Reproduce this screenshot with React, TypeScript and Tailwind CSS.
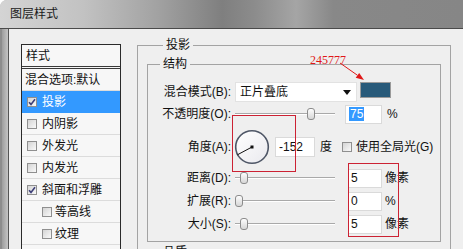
import React from "react";

const FONT = "font-['Liberation_Sans','Noto_Sans_CJK_SC',sans-serif]";

function Check({ checked = false }: { checked?: boolean }) {
  return (
    <span className="flex h-[10px] w-[10px] shrink-0 items-center justify-center border border-[#8f8f8f] bg-[linear-gradient(135deg,#d4d4d4,#f9f9f9)]">
      {checked && (
        <svg width="8" height="8" viewBox="0 0 8 8">
          <path d="M1 4.2 L3 6.4 L7 1.2" fill="none" stroke="#3d3f78" strokeWidth="1.6" />
        </svg>
      )}
    </span>
  );
}

function Slider({ pos }: { pos: number }) {
  return (
    <div className="relative h-[14px] w-[100px] shrink-0">
      <div className="absolute left-0 right-0 top-[6px] h-[2px] border-t border-[#a9a9a9] bg-white" />
      <div
        className="absolute top-[1px] h-[12px] w-[8px] rounded-[3px] border border-[#8c8c8c] bg-[linear-gradient(#fdfdfd,#d6d6d6)]"
        style={{ left: pos }}
      />
    </div>
  );
}

const STYLES = [
  { name: "内阴影" },
  { name: "外发光" },
  { name: "内发光" },
  { name: "斜面和浮雕", checked: true },
  { name: "等高线", sub: true },
  { name: "纹理", sub: true },
];

function StyleList() {
  return (
    <div className="mt-[6px] w-[100px] shrink-0 self-start border border-[#2a2a2a] bg-[#f7f7f7] pb-[20px]">
      <div className="flex h-[21px] items-center pl-[4px]">样式</div>
      <div className="h-[3px] border-y border-[#3a3a3a]" />
      <div className="flex h-[22px] items-center border-b border-[#dcdcdc] pl-[3px]">混合选项:默认</div>
      <div className="flex h-[22px] items-center gap-[5px] bg-[#3399ff] pl-[5px] text-white">
        <Check checked />
        投影
      </div>
      {STYLES.map((s) => (
        <div
          key={s.name}
          className={
            "flex h-[22px] items-center border-b border-[#dcdcdc] " +
            (s.sub ? "gap-[3px] pl-[20px]" : "gap-[5px] pl-[5px]")
          }
        >
          <Check checked={s.checked} />
          {s.name}
        </div>
      ))}
    </div>
  );
}

function Label({ children }: { children: React.ReactNode }) {
  return <div className="w-[83px] shrink-0 text-right">{children}</div>;
}

function Dial() {
  return (
    <svg width="36" height="36" viewBox="0 0 36 36" className="ml-[3px] shrink-0">
      <defs>
        <linearGradient id="dialFill" x1="0" y1="0" x2="1" y2="1">
          <stop offset="0" stopColor="#ffffff" />
          <stop offset="1" stopColor="#e9e9ee" />
        </linearGradient>
      </defs>
      <circle cx="18" cy="18" r="16.3" fill="url(#dialFill)" stroke="#4e5666" strokeWidth="1.6" />
      <line x1="18" y1="18" x2="3.4" y2="25.8" stroke="#111" strokeWidth="1" />
      <rect x="16.5" y="16.5" width="3" height="3" fill="#111" />
    </svg>
  );
}

export default function App() {
  return (
    <div className={"relative flex h-[249px] w-[463px] flex-col overflow-hidden rounded-tl-[7px] bg-[#b4b4b4] text-[12px] leading-[14px] text-[#111] " + FONT}>
      {/* title bar */}
      <div className="flex h-[28px] shrink-0 items-center bg-[linear-gradient(to_right,#d4d4d4_0%,#c2c2c2_18%,#a2a2a2_34%,#7f7f7f_48%,#8c8c8c_55%,#a5a5a5_64%,#888888_72%,#868686_100%)] pl-[10px] text-[#1a1a1a]">
        图层样式
      </div>

      <div className="flex flex-1 border-t border-[#4a4a4a]">
        {/* left window frame */}
        <div className="w-[8px] shrink-0 border-l-[2px] border-[#8d8d8d] bg-[linear-gradient(to_right,#9e9e9e,#c4c4c4)]" />

        <div className="flex flex-1 items-start border-l border-[#555] bg-[#efefef] pl-[12px] pt-[9px]">
          <StyleList />

          {/* 投影 group */}
          <fieldset className="ml-[16px] w-[314px] shrink-0 border border-[#a3a3a3] pb-[40px] pl-[9px]">
            <legend className="ml-[16px] px-[3px] leading-[14px]">投影</legend>

            <fieldset className="mt-[5px] w-[294px] border border-[#a3a3a3] pb-[7px]">
              <legend className="ml-[12px] px-[3px] leading-[14px]">结构</legend>

              <div className="mt-[11px] flex h-[20px] items-center">
                <Label>混合模式(B):</Label>
                <div className="ml-[4px] flex h-[20px] w-[122px] items-center justify-between border border-[#e2e2e2] bg-white pl-[4px] pr-[5px]">
                  <span>正片叠底</span>
                  <svg width="8" height="5" viewBox="0 0 8 5">
                    <path d="M0 0 H8 L4 5 Z" fill="#111" />
                  </svg>
                </div>
                <div className="ml-[3px] h-[16px] w-[31px] self-start border border-[#9a9a9a] bg-[#285a7a]" />
              </div>

              <div className="mt-[2px] flex h-[20px] items-center">
                <Label>不透明度(O):</Label>
                <div className="ml-[4px]">
                  <Slider pos={72} />
                </div>
                <div className="ml-[10px] flex h-[19px] w-[37px] items-center border border-[#dadada] bg-white pl-[3px]">
                  <span className="bg-[#3399ff] px-[1px] text-white">75</span>
                </div>
                <span className="ml-[5px]">%</span>
              </div>

              <div className="mt-[4px] flex h-[38px] items-center">
                <Label>角度(A):</Label>
                <Dial />
                <div className="ml-[5px] flex h-[20px] w-[40px] items-center border border-[#dadada] bg-white pl-[3px]">-152</div>
                <span className="ml-[5px]">度</span>
                <span className="ml-[10px]">
                  <Check />
                </span>
                <span className="ml-[4px]">使用全局光(G)</span>
              </div>

              {[
                { l: "距离(D):", v: "5", u: "像素", p: 5 },
                { l: "扩展(R):", v: "0", u: "%", p: 0 },
                { l: "大小(S):", v: "5", u: "像素", p: 5 },
              ].map((r, i) => (
                <div key={r.l} className={"flex h-[20px] items-center " + (i === 0 ? "mt-[2px]" : "mt-[3px]")}>
                  <Label>{r.l}</Label>
                  <div className="ml-[4px]">
                    <Slider pos={r.p} />
                  </div>
                  <div className="ml-[13px] flex h-[19px] w-[34px] items-center border border-[#dadada] bg-white pl-[2px]">{r.v}</div>
                  <span className="ml-[3px]">{r.u}</span>
                </div>
              ))}
            </fieldset>

            <fieldset className="mt-[3px] h-[60px] w-[294px] border border-[#a3a3a3]">
              <legend className="ml-[12px] px-[3px] leading-[14px]">品质</legend>
            </fieldset>
          </fieldset>
        </div>
      </div>

      {/* red annotations */}
      <div className="absolute left-[232px] top-[115px] h-[57px] w-[64px] border border-[#cc2233]" />
      <div className="absolute left-[348px] top-[163px] h-[74px] w-[51px] border border-[#cc2233]" />
      <div className="absolute left-[310px] top-[53px] font-['Liberation_Serif',serif] text-[12px] leading-[14px] text-[#e01818]">245777</div>
      <svg className="absolute left-[336px] top-[58px]" width="32" height="26" viewBox="0 0 32 26">
        <line x1="4" y1="5" x2="21.5" y2="17.3" stroke="#e01818" strokeWidth="1" />
        <polygon points="28,22 19.7,19.7 23.2,14.9" fill="#e01818" />
      </svg>
    </div>
  );
}
